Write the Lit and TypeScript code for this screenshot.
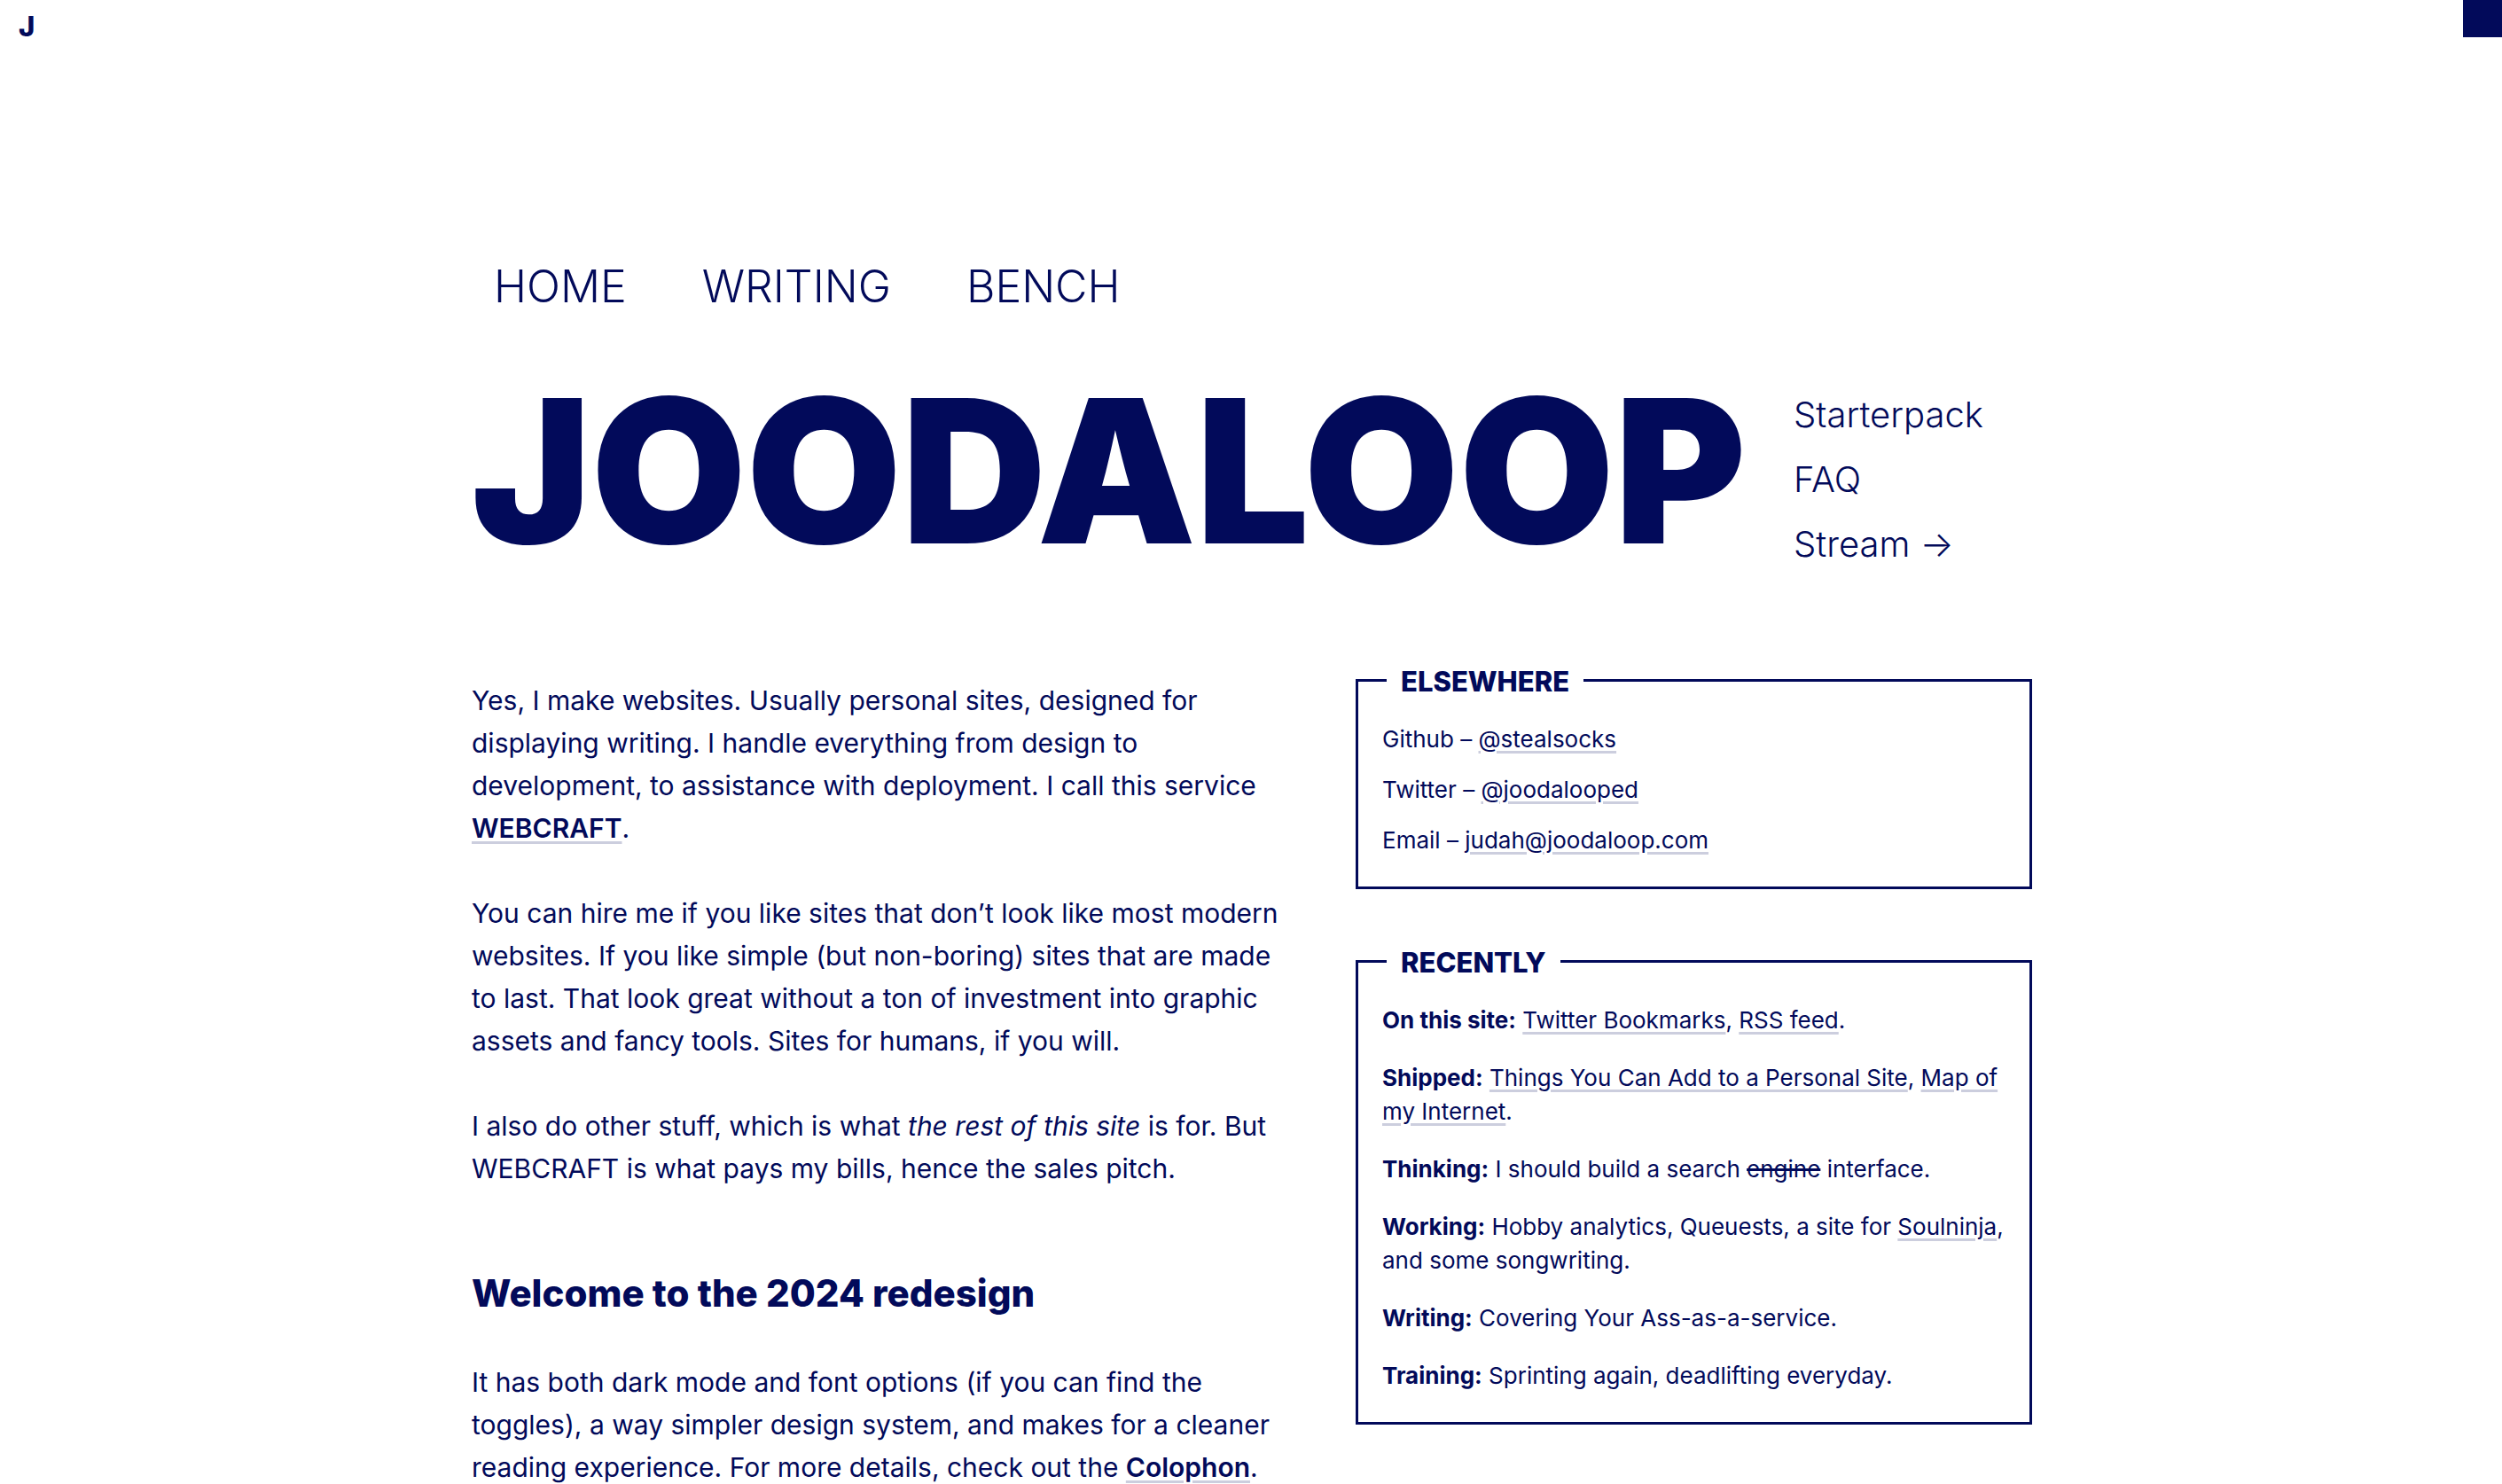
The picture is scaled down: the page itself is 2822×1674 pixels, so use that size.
import { LitElement, html, css, type TemplateResult } from "lit";
import { customElement, property, state } from "lit/decorators.js";

const linkStyles = css`
  a {
    color: inherit;
    text-decoration: none;
  }
  .link {
    text-decoration: underline;
    text-decoration-color: var(--rule);
    text-decoration-thickness: 3px;
    text-underline-offset: 4px;
  }
`;

@customElement("titled-card")
export class TitledCard extends LitElement {
  @property() heading = "";

  static styles = css`
    :host {
      display: block;
    }
    .card {
      border: 3px solid var(--ink);
      padding: 0 20px 33px 27px;
    }
    .title {
      width: fit-content;
      margin: -19px 0 27px 5px;
      padding: 0 16px;
      background: var(--paper);
      font-size: 31px;
      font-weight: 800;
      line-height: 38px;
      text-transform: uppercase;
    }
  `;

  render() {
    return html`
      <section class="card">
        <h2 class="title">${this.heading}</h2>
        <slot></slot>
      </section>
    `;
  }
}

const navItems = ["Home", "Writing", "Bench"];
const sideItems = ["Starterpack", "FAQ", "Stream →"];

const contacts = [
  { place: "Github", handle: "@stealsocks", href: "#github" },
  { place: "Twitter", handle: "@joodalooped", href: "#twitter" },
  { place: "Email", handle: "judah@joodaloop.com", href: "mailto:judah@joodaloop.com" },
];

const link = (text: string) => html`<a class="link" href="#">${text}</a>`;

const updates: { label: string; body: TemplateResult }[] = [
  { label: "On this site", body: html`${link("Twitter Bookmarks")}, ${link("RSS feed")}.` },
  {
    label: "Shipped",
    body: html`${link("Things You Can Add to a Personal Site")}, ${link("Map of my Internet")}.`,
  },
  { label: "Thinking", body: html`I should build a search <s class="struck">engine</s> interface.` },
  {
    label: "Working",
    body: html`Hobby analytics, Queuests, a site for ${link("Soulninja")}, and some songwriting.`,
  },
  { label: "Writing", body: html`Covering Your Ass-as-a-service.` },
  { label: "Training", body: html`Sprinting again, deadlifting everyday.` },
];

@customElement("app-root")
export class AppRoot extends LitElement {
  @state() private dark = false;

  static styles = [
    linkStyles,
    css`
      :host {
        display: block;
        font-family: Inter, "Liberation Sans", sans-serif;
      }
      .page {
        --ink: #020a5a;
        --paper: #ffffff;
        --rule: #cccede;
        min-height: 100vh;
        overflow: hidden;
        box-sizing: border-box;
        color: var(--ink);
        background: var(--paper);
      }
      .page.dark {
        --ink: #ffffff;
        --paper: #020a5a;
        --rule: #4a5090;
      }
      .topbar {
        display: flex;
        justify-content: space-between;
        align-items: flex-start;
      }
      .mark {
        padding: 9px 21px 0;
        font-size: 31px;
        font-weight: 800;
        line-height: 42px;
      }
      .toggle {
        width: 44px;
        height: 42px;
        padding: 0;
        border: 0;
        background: var(--ink);
        cursor: pointer;
      }
      .wrap {
        box-sizing: border-box;
        max-width: 1762px;
        margin: 0 auto;
        padding: 242px 0 0 2px;
      }
      .nav {
        display: flex;
        gap: 85px;
        padding-left: 25px;
        font-size: 50px;
        font-weight: 300;
        line-height: 60px;
        text-transform: uppercase;
      }
      .hero {
        display: flex;
        align-items: flex-start;
        justify-content: space-between;
        margin-top: 65px;
      }
      .name {
        margin: 0;
        font-size: 226px;
        font-weight: 900;
        line-height: 226px;
      }
      .side {
        display: flex;
        flex-direction: column;
        width: 269px;
        padding-top: 13px;
        font-size: 40px;
        font-weight: 300;
        line-height: 73px;
      }
      .columns {
        display: grid;
        grid-template-columns: minmax(0, 1fr) 763px;
        gap: 60px;
        align-items: start;
        margin-top: 116px;
      }
      .prose {
        font-size: 30px;
        line-height: 48px;
      }
      .prose p {
        margin: 0 0 48px;
      }
      .strong {
        font-weight: 600;
      }
      .subhead {
        margin: 91px 0 50px;
        font-size: 42px;
        font-weight: 800;
        line-height: 52px;
      }
      .cards {
        display: grid;
        gap: 80px;
        font-size: 26px;
        line-height: 38px;
      }
      .list {
        display: grid;
        gap: 19px;
        margin: 0;
        padding: 0;
        list-style: none;
      }
      .list.loose {
        gap: 27px;
      }
      .label {
        font-weight: 700;
      }
      .struck {
        text-decoration-thickness: 3px;
      }
    `,
  ];

  private toggleTheme() {
    this.dark = !this.dark;
  }

  render() {
    return html`
      <div class="page ${this.dark ? "dark" : ""}">
        <header class="topbar">
          <a class="mark" href="#">J</a>
          <button class="toggle" type="button" aria-label="Toggle dark mode" @click=${this.toggleTheme}></button>
        </header>
        <div class="wrap">
          <nav class="nav">${navItems.map((item) => html`<a href="#">${item}</a>`)}</nav>
          <div class="hero">
            <h1 class="name">JOODALOOP</h1>
            <nav class="side">${sideItems.map((item) => html`<a href="#">${item}</a>`)}</nav>
          </div>
          <main class="columns">
            <article class="prose">
              <p>
                Yes, I make websites. Usually personal sites, designed for displaying writing. I handle
                everything from design to development, to assistance with deployment. I call this service
                <a class="link strong" href="#">WEBCRAFT</a>.
              </p>
              <p>
                You can hire me if you like sites that don’t look like most modern websites. If you like
                simple (but non-boring) sites that are made to last. That look great without a ton of
                investment into graphic assets and fancy tools. Sites for humans, if you will.
              </p>
              <p>
                I also do other stuff, which is what <em>the rest of this site</em> is for. But WEBCRAFT is
                what pays my bills, hence the sales pitch.
              </p>
              <h2 class="subhead">Welcome to the 2024 redesign</h2>
              <p>
                It has both dark mode and font options (if you can find the toggles), a way simpler design
                system, and makes for a cleaner reading experience. For more details, check out the
                <a class="link strong" href="#">Colophon</a>.
              </p>
            </article>
            <aside class="cards">
              <titled-card heading="Elsewhere">
                <ul class="list">
                  ${contacts.map(
                    (c) => html`<li>${c.place} – <a class="link" href=${c.href}>${c.handle}</a></li>`,
                  )}
                </ul>
              </titled-card>
              <titled-card heading="Recently">
                <ul class="list loose">
                  ${updates.map((u) => html`<li><span class="label">${u.label}:</span> ${u.body}</li>`)}
                </ul>
              </titled-card>
            </aside>
          </main>
        </div>
      </div>
    `;
  }
}
